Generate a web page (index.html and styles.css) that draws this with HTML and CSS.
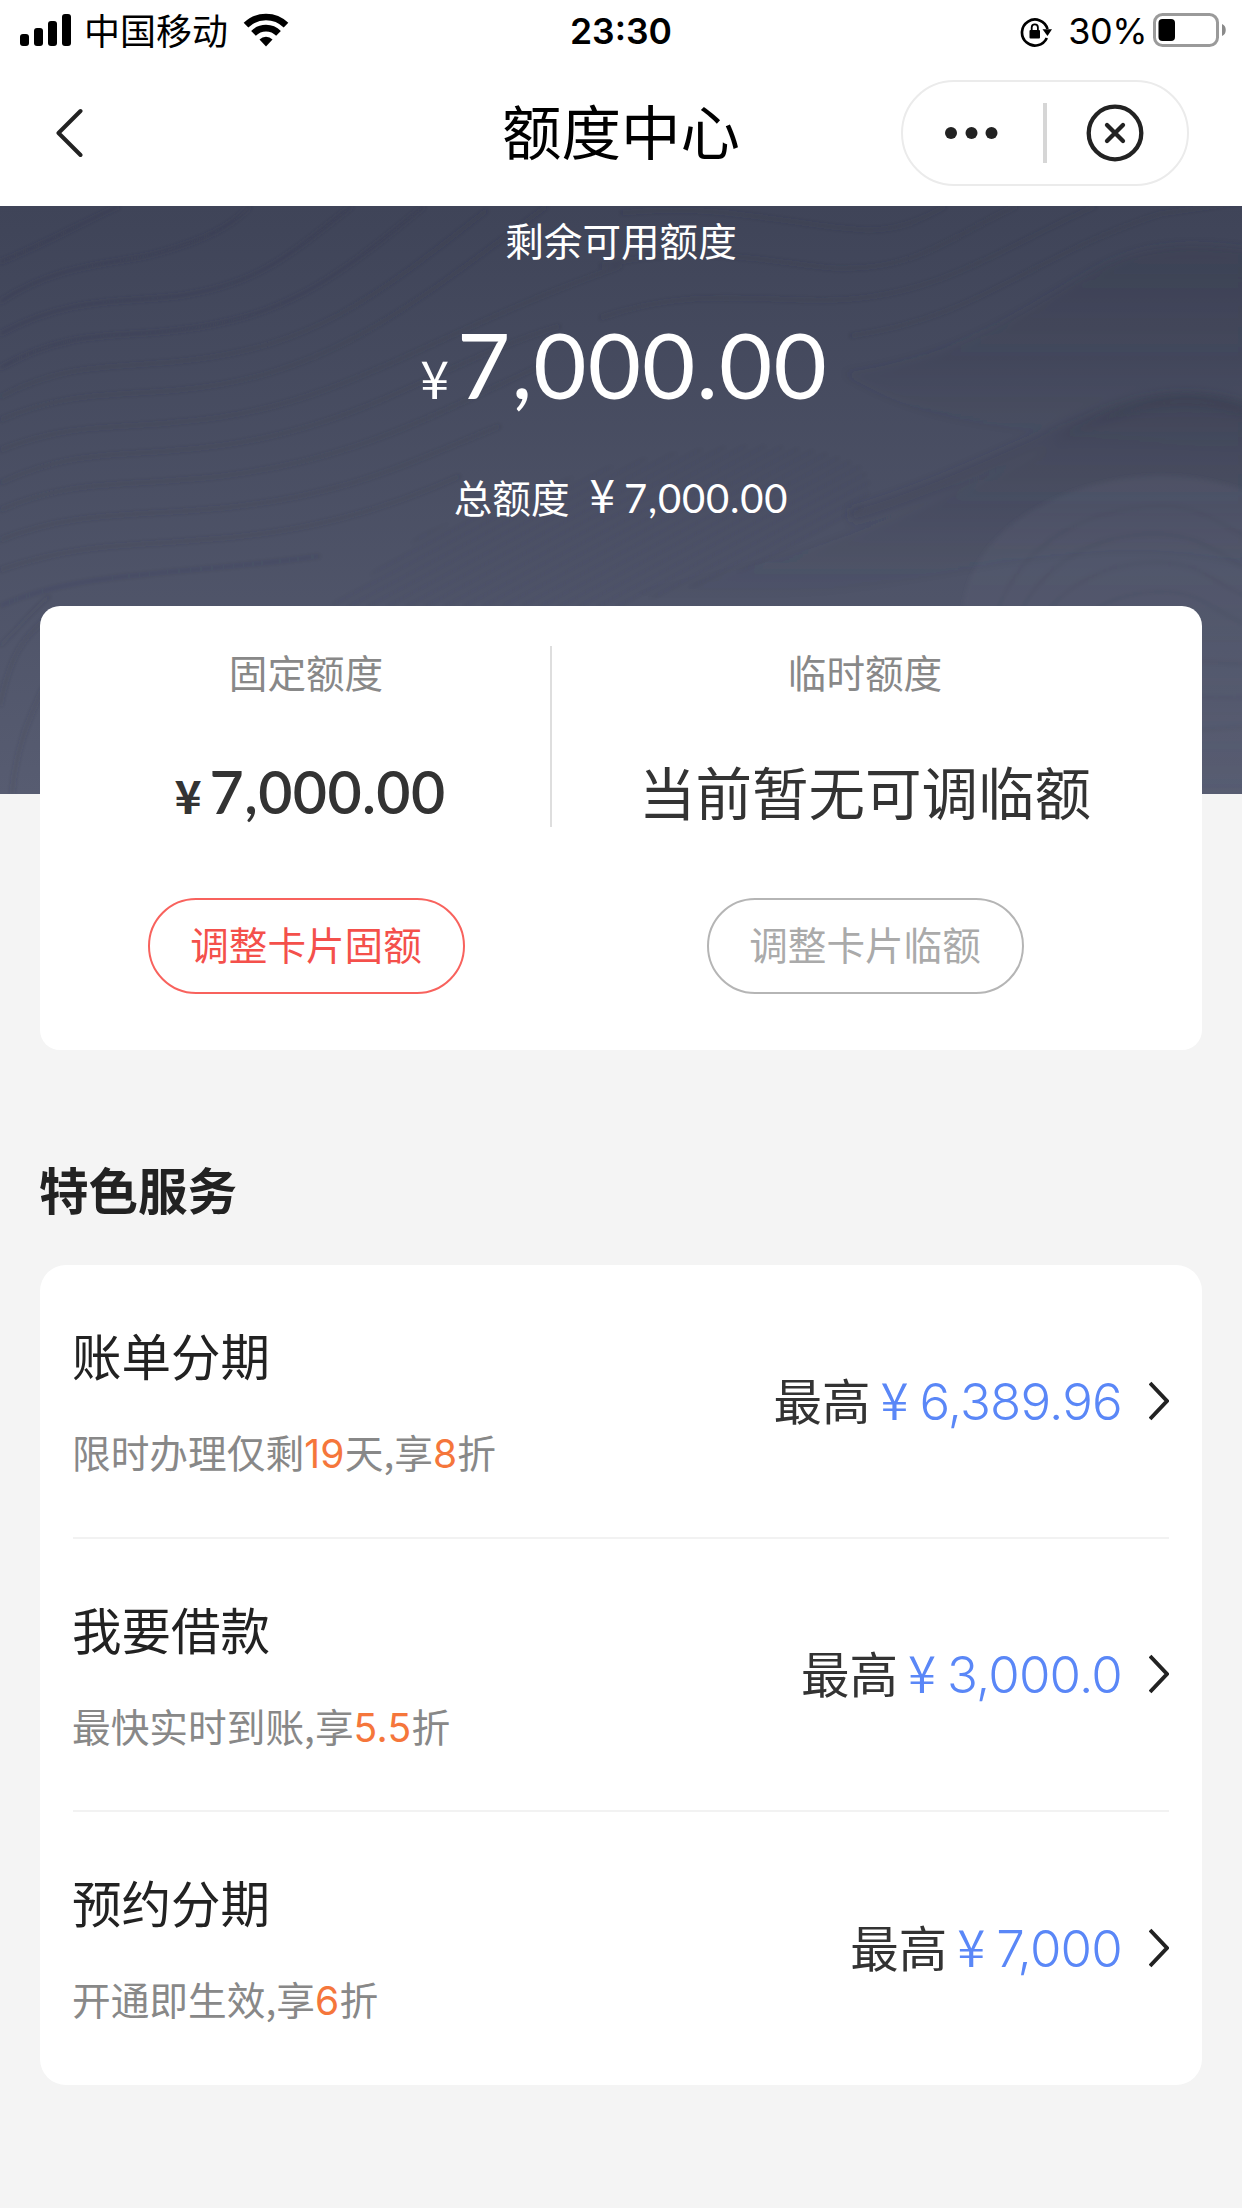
FILE: index.html
```html
<!DOCTYPE html>
<html lang="zh-CN">
<head>
<meta charset="utf-8">
<title>额度中心</title>
<link rel="stylesheet" href="styles.css">
</head>
<body>
<header class="top">
  <div class="status">
    <div class="status-left">
      <svg class="signal" width="52" height="32" viewBox="0 0 52 32"><rect x="0" y="20" width="9" height="12" rx="3"/><rect x="14" y="14" width="9" height="18" rx="3"/><rect x="28" y="7" width="9" height="25" rx="3"/><rect x="42" y="0" width="9" height="32" rx="3"/></svg>
      <span class="carrier">中国移动</span>
      <svg class="wifi" width="46" height="34" viewBox="0 0 46 34"><g fill="none" stroke="#000" stroke-width="6.6"><path d="M3 12.2A28.500 28.500 0 0 1 43 12.200"/><path d="M10.500 20.400A17.500 17.500 0 0 1 35.500 20.400"/></g><path d="M23 33.500L16.500 26.500A9.300 9.300 0 0 1 29.500 26.500Z"/></svg>
    </div>
    <span class="clock">23:30</span>
    <div class="status-right">
      <svg class="lock" width="33" height="30" viewBox="0 0 33 30"><path d="M26.800 21A13 13 0 1 1 27.500 12" fill="none" stroke="#000" stroke-width="2.700"/><path d="M22.500 12.200H32L27.500 19Z"/><rect x="9.500" y="13" width="10.500" height="8.500" rx="1"/><path d="M11.700 14V10.500a3.100 3.100 0 0 1 6.200 0V14" fill="none" stroke="#000" stroke-width="1.800"/></svg>
      <span class="percent">30%</span>
      <svg class="battery" width="74" height="34" viewBox="0 0 74 34"><rect x="1.500" y="1.500" width="63" height="31" rx="8" fill="none" stroke="#9a9a9a" stroke-width="3"/><rect x="5.500" y="6" width="16.500" height="22" rx="4"/><path d="M69 11c5 1.500 5 10.500 0 12Z" fill="#8a8a8a"/></svg>
    </div>
  </div>
  <div class="nav">
    <svg class="back" width="30" height="50" viewBox="0 0 30 50"><path d="M27.500 3L5.500 25L27.500 47" fill="none" stroke="#222" stroke-width="4" stroke-linecap="round" stroke-linejoin="round"/></svg>
    <h1 class="title">额度中心</h1>
    <div class="capsule">
      <svg width="54" height="14" viewBox="0 0 54 14" fill="#222"><circle cx="7" cy="7" r="6"/><circle cx="27.500" cy="7" r="6"/><circle cx="47.500" cy="7" r="6"/></svg>
      <span class="capsule-line"></span>
      <svg width="58" height="58" viewBox="0 0 58 58" fill="none" stroke="#222" stroke-width="4.300"><circle cx="29" cy="29" r="26.300"/><path d="M21 21L37 37M37 21L21 37" stroke-linecap="round"/></svg>
    </div>
  </div>
</header>
<main>
  <section class="hero">
    <svg class="waves" width="1242" height="588" viewBox="0 0 1242 588" fill="none">
      <defs>
        <linearGradient id="fold" x1="0" y1="0" x2="0" y2="1"><stop offset="0" stop-color="#343849" stop-opacity=".3"/><stop offset="1" stop-color="#343849" stop-opacity="0"/></linearGradient>
        <linearGradient id="hill" x1="0" y1="0" x2="0" y2="1"><stop offset="0" stop-color="#62677c" stop-opacity=".22"/><stop offset="1" stop-color="#62677c" stop-opacity=".05"/></linearGradient>
        <filter id="soft"><feGaussianBlur stdDeviation="2"/></filter>
        <filter id="haze"><feGaussianBlur stdDeviation="5"/></filter>
        <pattern id="mesh" width="9" height="9" patternUnits="userSpaceOnUse" patternTransform="rotate(-28)"><path d="M0 4H9" stroke="#343849" stroke-opacity=".09" stroke-width="2"/></pattern>
      </defs>
      <g filter="url(#haze)">
        <path d="M843 167C960 150 1010 112 1084 70C1140 36 1190 36 1250 44V250C1080 220 960 240 843 167Z" fill="url(#fold)"/>
        <path d="M621 387C800 360 900 310 1037 247C1120 195 1175 172 1250 200V360C1050 300 850 430 621 387Z" fill="url(#fold)"/>
        <path d="M850 310C920 290 980 262 1037 237C1120 196 1180 180 1250 204" stroke="#343849" stroke-opacity=".22" stroke-width="14"/>
      </g>
      <g filter="url(#soft)">
        <path d="M962 420C960 320 1070 274 1150 270C1190 268 1220 276 1250 286V588H990Z" fill="url(#hill)"/>
        <path d="M420 330C570 260 760 210 860 260C900 300 820 350 621 400H330Z" fill="url(#mesh)"/>
        <g stroke="#343849" stroke-opacity=".34" stroke-width="3">
          <path d="M0 56C40 40 80 18 119 0"/>
          <path d="M0 96C59 56 120 58 158 47C205 34 232 20 250 0"/>
          <path d="M0 128C70 90 120 97 178 90C260 78 290 48 352 0"/>
          <path d="M0 162C70 122 120 132 178 124C280 112 330 78 424 0"/>
        </g>
        <g stroke="#343849" stroke-opacity=".21" stroke-width="3">
          <path d="M0 191C70 154 120 163 190 154C310 140 370 96 487 4"/>
          <path d="M0 214C70 184 120 190 178 184C330 170 410 100 547 0"/>
          <path d="M0 244C70 216 120 223 178 216C340 204 420 130 621 60"/>
          <path d="M0 277C70 244 120 250 178 244C350 232 430 160 560 120"/>
          <path d="M0 304C70 274 120 280 178 274C340 264 430 210 540 160"/>
          <path d="M0 334C70 306 130 310 198 304C340 294 410 256 500 220"/>
          <path d="M0 364C80 336 140 340 198 334C300 328 380 306 460 270"/>
          <path d="M0 500C12 440 28 430 44 414"/>
          <path d="M12 588C16 540 30 510 44 480"/>
          <path d="M621 7C720-4 790 20 867 24C900 24 920 14 946 0"/>
          <path d="M600 60C700 36 760 56 835 62C920 66 960 24 1017 0"/>
          <path d="M600 112C690 80 760 96 835 94C940 90 1000 42 1096 0"/>
          <path d="M850 130C980 112 1030 50 1160 8L1242-4"/>
        </g>
        <g stroke="#343849" stroke-opacity=".14" stroke-width="3">
          <path d="M0 400C80 364 180 370 320 350"/>
          <path d="M0 440C24 416 36 400 50 390"/>
          <path d="M990 430C1010 340 1080 306 1150 300C1200 296 1220 320 1250 332"/>
          <path d="M1010 430C1030 370 1080 330 1150 328C1200 326 1220 350 1250 364"/>
          <path d="M1030 430C1060 376 1110 356 1160 356C1205 358 1220 382 1250 392"/>
          <path d="M1070 430C1090 396 1130 384 1170 386C1205 388 1220 410 1250 420"/>
          <path d="M1190 455L1250 458M1190 490L1250 492M1190 525L1250 520"/>
        </g>
      </g>
    </svg>
    <p class="hero-label">剩余可用额度</p>
    <p class="hero-amount"><span class="yen">¥</span><span class="num">7,000.00</span></p>
    <p class="hero-total"><span>总额度</span><span class="yen">¥</span><span class="num">7,000.00</span></p>
  </section>
  <section class="limits">
    <div class="limit limit-fixed">
      <p class="limit-label">固定额度</p>
      <p class="limit-value limit-money"><span class="yen">¥</span><span class="num">7,000.00</span></p>
      <a class="pill pill-red">调整卡片固额</a>
    </div>
    <div class="limit-line"></div>
    <div class="limit limit-temp">
      <p class="limit-label">临时额度</p>
      <p class="limit-value">当前暂无可调临额</p>
      <a class="pill pill-grey">调整卡片临额</a>
    </div>
  </section>
  <h2 class="section-title">特色服务</h2>
  <section class="services">
    <div class="service">
      <div class="service-text">
        <h3>账单分期</h3>
        <p>限时办理仅剩<em>19</em>天,享<em>8</em>折</p>
      </div>
      <div class="service-max"><span>最高</span><span class="yen">¥</span><span class="num">6,389.96</span></div>
      <svg class="arrow" width="20" height="40" viewBox="0 0 20 40"><path d="M1 2L18 20L1 38" fill="none" stroke="#222" stroke-width="4"/></svg>
    </div>
    <div class="service">
      <div class="service-text">
        <h3>我要借款</h3>
        <p>最快实时到账,享<em>5.5</em>折</p>
      </div>
      <div class="service-max"><span>最高</span><span class="yen">¥</span><span class="num">3,000.0</span></div>
      <svg class="arrow" width="20" height="40" viewBox="0 0 20 40"><path d="M1 2L18 20L1 38" fill="none" stroke="#222" stroke-width="4"/></svg>
    </div>
    <div class="service">
      <div class="service-text">
        <h3>预约分期</h3>
        <p>开通即生效,享<em>6</em>折</p>
      </div>
      <div class="service-max"><span>最高</span><span class="yen">¥</span><span class="num">7,000</span></div>
      <svg class="arrow" width="20" height="40" viewBox="0 0 20 40"><path d="M1 2L18 20L1 38" fill="none" stroke="#222" stroke-width="4"/></svg>
    </div>
  </section>
</main>
</body>
</html>
```
FILE: styles.css
```css
* { box-sizing: border-box; margin: 0; padding: 0; }
body {
  width: 1242px;
  min-height: 2208px;
  background: #f4f4f4;
  color: #222;
  font-family: "Noto Sans CJK SC", sans-serif;
  font-weight: 400;
}
svg { display: block; flex: none; }
.clock, .percent, .service-max .num, em { font-family: Inter, "Noto Sans CJK SC", sans-serif; font-style: normal; }
.hero .num, .limits .num { font-family: Lato, "Noto Sans CJK SC", sans-serif; }

.top { height: 206px; background: #fff; color: #000; }
.status {
  display: grid;
  grid-template-columns: 1fr auto 1fr;
  align-items: center;
  height: 60px;
  padding: 0 15px 0 20px;
}
.status-left, .status-right { display: flex; align-items: center; }
.status-right { justify-content: flex-end; }
.carrier { margin: 0 15px 0 12px; font-size: 36px; line-height: 58px; transform: translateY(-1px); }
.clock { margin-right: 5px; padding-top: 3px; font-size: 35.500px; font-weight: 600; line-height: 57px; }
.lock { margin: 3px 15px 0 0; }
.percent { margin-right: 6px; padding-top: 3px; font-size: 36px; line-height: 57px; letter-spacing: -.5px; }
.nav {
  display: grid;
  grid-template-columns: 1fr auto 1fr;
  align-items: center;
  height: 146px;
  padding: 0 53px;
}
.title { padding-bottom: 8px; font-size: 59.500px; font-weight: 400; line-height: 80px; }
.capsule {
  display: flex;
  align-items: center;
  justify-self: end;
  width: 288px;
  height: 106px;
  padding-left: 41px;
  border: 2px solid #ebebeb;
  border-radius: 53px;
}
.capsule-line { width: 4px; height: 60px; margin: 0 39px 0 45px; background: #d6d6d6; }

.hero {
  position: relative;
  display: flex;
  flex-direction: column;
  align-items: center;
  height: 588px;
  background: linear-gradient(#3f4458, #575c71);
  color: #fff;
}
.waves { position: absolute; left: 0; top: 0; }
.hero p { position: relative; display: flex; align-items: baseline; }
.hero-label { margin-top: 5px; font-size: 38.600px; line-height: 56px; }
.hero-amount { height: 120px; margin-top: 37px; padding-left: 6px; line-height: 120px; }
.hero-amount .yen { margin-right: 8px; font-size: 52px; }
.hero-amount .num { font-size: 92px; letter-spacing: 1px; }
.hero-total { height: 56px; margin-top: 41px; font-size: 38.600px; line-height: 56px; }
.hero-total .yen { margin: 0 9px 0 20px; font-size: 46px; }
.hero-total .num { font-size: 40px; letter-spacing: .8px; }

.limits {
  position: relative;
  display: flex;
  width: 1162px;
  height: 444px;
  margin: -188px auto 0;
  border-radius: 20px;
  background: #fff;
}
.limit { display: flex; flex-direction: column; align-items: center; }
.limit-fixed { width: 510px; padding-left: 22px; }
.limit-temp { flex: 1; padding-right: 24px; }
.limit-line { width: 2px; height: 181px; margin-top: 40px; background: #dedede; }
.limit-label { margin-top: 37px; color: #888; font-size: 38.600px; line-height: 56px; }
.limit-value { height: 80px; margin-top: 51px; color: #333; font-size: 56.500px; line-height: 80px; }
.limit-money { display: flex; align-items: baseline; padding: 2px 0 0 8px; font-weight: 600; }
.limit-money .yen { margin-right: 8px; font-size: 46px; }
.limit-money .num { font-size: 59px; letter-spacing: .400px; }
.pill {
  width: 317px;
  height: 96px;
  margin-top: 68px;
  border: 2px solid;
  border-radius: 48px;
  font-size: 38.600px;
  line-height: 87px;
  text-align: center;
}
.pill-red { border-color: #f8625d; color: #f4504b; }
.pill-grey { border-color: #b5b5b5; color: #aaa; }

.section-title { margin: 99px 0 0 39px; font-size: 49.500px; font-weight: 600; line-height: 80px; }
.services {
  width: 1162px;
  height: 820px;
  margin: 36px auto 0;
  padding: 0 33px;
  border-radius: 26px;
  background: #fff;
}
.service { display: flex; align-items: center; height: 273.500px; border-bottom: 2px solid #f2f2f2; }
.service:last-child { border-color: transparent; }
.service-text { flex: 1; margin-left: -1px; }
.service h3 { font-size: 49.500px; font-weight: 400; line-height: 72px; }
.service-text p { margin-top: 32px; color: #888; font-size: 38.700px; line-height: 56px; }
.service em { color: #f5763b; font-size: 39px; letter-spacing: .3px; }
.service-max { display: flex; align-items: baseline; margin: 0 27px 2px 0; color: #333; font-size: 48.500px; line-height: 72px; }
.service-max .yen, .service-max .num { color: #5a87f7; }
.service-max .yen { margin: 0 11px 0 10px; font-size: 51px; font-weight: 350; }
.service-max .num { font-size: 51px; font-weight: 350; letter-spacing: -.800px; }
```
